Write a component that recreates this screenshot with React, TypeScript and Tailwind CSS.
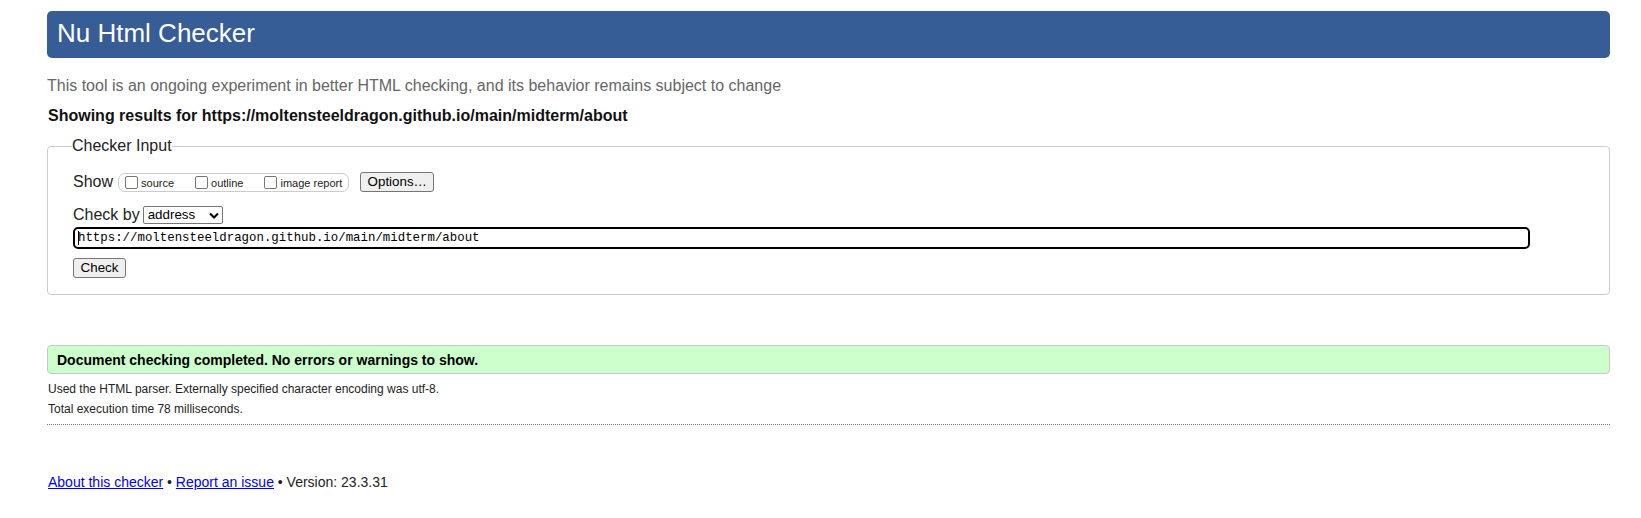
function Box({ label, gap }: { label: string; gap?: boolean }) {
  return (
    <span className={`flex items-center ${gap ? "ml-[21px]" : ""}`}>
      <span className="block h-[13px] w-[13px] rounded-[2px] border border-[#767676] bg-white" />
      <span className="ml-[3px] pt-[2px] text-[11px] leading-[13px] text-[#222]">{label}</span>
    </span>
  );
}

function Btn({ children, w }: { children: React.ReactNode; w: string }) {
  return (
    <button
      className={`${w} block h-[20px] rounded-[3px] border border-[#767676] bg-[#efefef] text-[13.33px] leading-[18px] text-black`}
    >
      {children}
    </button>
  );
}

export default function App() {
  return (
    <div className="min-h-[518px] bg-white pl-[47px] pr-[31px] pt-[11px] font-['Liberation_Sans',Arial,sans-serif] text-[#222]">
      <h1 className="h-[47px] rounded-[5px] bg-[#365d95] pl-[10px] pb-[2px] text-[26px] font-normal leading-[45px] text-white">
        Nu Html Checker
      </h1>

      <p className="mt-[18px] text-[16px] leading-[20px] text-[#666]">
        This tool is an ongoing experiment in better HTML checking, and its behavior remains subject to change
      </p>
      <p className="mt-[10px] pl-[1px] text-[16px] font-bold leading-[20px] text-[#111]">
        Showing results for https://moltensteeldragon.github.io/main/midterm/about
      </p>

      <fieldset className="mt-[10px] rounded-[4px] border border-[#ccc] px-[25px] pt-[16px] pb-[16px]">
        <legend className="-ml-[1px] text-[16px] leading-[20px] text-[#222]">Checker Input</legend>

        <div className="flex h-[20px] items-center">
          <span className="text-[16px] leading-[20px]">Show</span>
          <span className="ml-[5px] flex h-[19px] items-center rounded-[7px] border border-[#ccc] pl-[6px] pr-[6px]">
            <Box label="source" />
            <Box label="outline" gap />
            <Box label="image report" gap />
          </span>
          <span className="ml-[11px]">
            <Btn w="w-[74px]">Options…</Btn>
          </span>
        </div>

        <div className="mt-[13px] flex h-[20px] items-center">
          <span className="text-[16px] leading-[20px]">Check by</span>
          <span className="ml-[3px] flex h-[18px] w-[80px] items-center justify-between rounded-[2px] border border-[#767676] bg-white pl-[4px] pr-[3px] text-[13.33px] leading-[16px] text-black">
            address
            <svg width="10" height="7" viewBox="0 0 10 7">
              <path d="M1 1.5 L5 5.5 L9 1.5" fill="none" stroke="#000" strokeWidth="2" />
            </svg>
          </span>
        </div>

        <div className="mt-[2px] flex h-[22px] w-[1457px] items-center rounded-[5px] border-2 border-black pl-[3px] font-['Liberation_Mono',monospace] text-[12.4px] leading-[18px] text-black">
          <span className="mr-[-1px] h-[14px] w-[1px] bg-black" />
          https://moltensteeldragon.github.io/main/midterm/about
        </div>

        <div className="mt-[9px] flex">
          <Btn w="w-[53px]">Check</Btn>
        </div>
      </fieldset>

      <div className="mt-[50px] h-[29px] rounded-[4px] border border-[#c8c8c8] bg-[#ccffcc] pl-[9px] pt-[2px] text-[14px] font-bold leading-[25px] text-black">
        Document checking completed. No errors or warnings to show.
      </div>

      <p className="mt-[5px] pl-[1px] text-[12px] leading-[20px]">
        Used the HTML parser. Externally specified character encoding was utf-8.
      </p>
      <p className="pl-[1px] text-[12px] leading-[20px]">Total execution time 78 milliseconds.</p>
      <div className="mt-[5px] border-t border-dotted border-[#777]" />

      <p className="mt-[47px] pl-[1px] text-[14px] leading-[20px]">
        <a href="#" className="text-[#0000ee] underline">About this checker</a>
        {" • "}
        <a href="#" className="text-[#0000ee] underline">Report an issue</a>
        {" • Version: 23.3.31"}
      </p>
    </div>
  );
}
